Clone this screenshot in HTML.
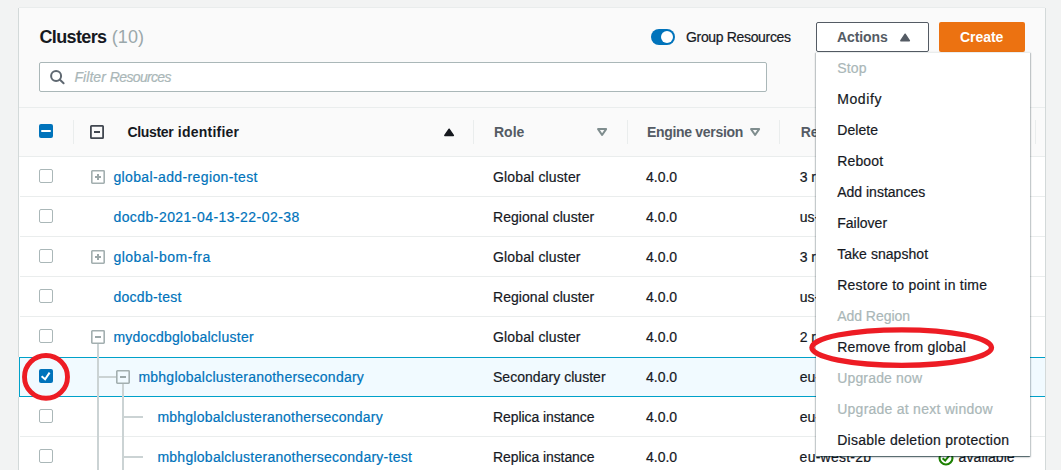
<!DOCTYPE html>
<html>
<head>
<meta charset="utf-8">
<title>Clusters</title>
<style>
*{box-sizing:border-box;margin:0;padding:0}
html,body{width:1061px;height:470px;overflow:hidden;background:#f2f3f3;font-family:"Liberation Sans",sans-serif;font-size:14px;color:#16191f}
.abs{position:absolute}
#panel{position:absolute;left:19px;top:8px;width:1026px;height:480px;background:#fff;box-shadow:1px 0 0 0 #d3d9d9,-1px 0 0 0 #d3d9d9,0 -1px 0 0 #e9ecec}
#phead{position:absolute;left:0;top:0;width:1026px;height:100px;background:#fafafa;border-bottom:1px solid #eaeded}
#thead{position:absolute;left:0;top:100px;width:1026px;height:49px;background:#fafafa;border-bottom:1px solid #eaeded}
.t{position:absolute;white-space:nowrap;line-height:20px;height:20px;-webkit-text-stroke:0.2px currentColor}
.b{font-weight:bold;-webkit-text-stroke:0}
.lnk{color:#0073bb}
.dis{color:#aab7b8}
.hl{position:absolute;left:20px;width:1025px;height:1px;background:#eaeded}
.vs{position:absolute;width:1px;height:24px;top:120px;background:#eaeded}
.cb{position:absolute;left:39px;width:14px;height:14px;border:1px solid #aab7b8;border-radius:2px;background:#fff}
.tl{position:absolute;background:#cbd3d4}
</style>
</head>
<body>
<div id="panel">
  <div id="phead"></div>
  <div id="thead"></div>
</div>

<!-- title -->
<div class="t b" id="title" style="left:39.5px;top:26px;font-size:18px;line-height:22px;height:22px;letter-spacing:-0.63px">Clusters<span id="cnt" style="font-weight:normal;color:#9aa8ab;letter-spacing:0.1px;margin-left:5.2px">(10)</span></div>

<!-- filter -->
<div class="abs" style="left:39px;top:62px;width:728px;height:30px;border:1px solid #aab7b8;border-radius:2px;background:#fff"></div>
<svg class="abs" style="left:49px;top:69px" width="17" height="17" viewBox="0 0 17 17"><circle cx="7.1" cy="7" r="5" fill="none" stroke="#5f6871" stroke-width="2"/><path d="M10.7 10.6 L14.6 14.3" stroke="#5f6871" stroke-width="2" stroke-linecap="round"/></svg>
<div class="t" id="filt" style="left:74.5px;top:67px;font-style:italic;color:#aab7b8"><span style="letter-spacing:0.05px">Filter </span><span style="letter-spacing:-0.66px">Resources</span></div>

<!-- toggle -->
<div class="abs" style="left:651px;top:29px;width:24px;height:16px;border-radius:8px;background:#0073bb"></div>
<div class="abs" style="left:661px;top:31px;width:12px;height:12px;border-radius:6px;background:#fff"></div>
<div class="t" id="grp" style="left:686px;top:27px;letter-spacing:-0.337px">Group Resources</div>

<!-- buttons -->
<div class="abs" style="left:816px;top:22px;width:113px;height:30px;border:1px solid #545b64;border-radius:2px;background:#fff"></div>
<div class="t b" id="act" style="left:837px;top:27px;color:#545b64;letter-spacing:-0.091px">Actions</div>
<svg class="abs" style="left:899.9px;top:32.7px" width="11" height="9" viewBox="0 0 11 9"><path d="M5.1 1.2 L9.4 7.7 L0.8 7.7 Z" fill="#545b64" stroke="#545b64" stroke-width="1.4" stroke-linejoin="round"/></svg>
<div class="abs" style="left:939px;top:22px;width:86px;height:30px;border-radius:2px;background:#ec7211"></div>
<div class="t b" id="crt" style="left:960px;top:27px;color:#fff;letter-spacing:-0.059px">Create</div>

<!-- table header -->
<div class="abs" style="left:39px;top:124px;width:14px;height:14px;border-radius:2px;background:#0073bb"></div>
<div class="abs" style="left:41px;top:130px;width:10px;height:2px;border-radius:1px;background:#fff"></div>
<div class="vs" style="left:73px"></div>
<div class="vs" style="left:473px"></div>
<div class="vs" style="left:627px"></div>
<div class="vs" style="left:779px"></div>
<div class="vs" style="left:1035px"></div>
<svg class="abs" style="left:90px;top:125px" width="14" height="14" viewBox="0 0 14 14"><rect x="0.9" y="0.9" width="12.2" height="12.2" rx="0.6" fill="none" stroke="#414750" stroke-width="1.8"/><rect x="4" y="6" width="6" height="2" fill="#414750"/></svg>
<div class="t b" id="h1x" style="left:127.5px;top:122px"><span style="letter-spacing:-0.36px">Cluster</span><span style="letter-spacing:0.23px;margin-left:4.6px">identifier</span></div>
<svg class="abs" style="left:443.9px;top:127.6px" width="11" height="9" viewBox="0 0 11 9"><path d="M5.1 1.2 L9.4 7.5 L0.8 7.5 Z" fill="#16191f" stroke="#16191f" stroke-width="1.4" stroke-linejoin="round"/></svg>
<div class="t b" id="h2" style="left:494px;top:122px;color:#545b64">Role</div>
<svg class="abs" style="left:597px;top:128px" width="11" height="9" viewBox="0 0 11 9"><path d="M1.1 1.1 L9.1 1.1 L5.1 7 Z" fill="none" stroke="#7f8d8e" stroke-width="2" stroke-linejoin="round"/></svg>
<div class="t b" id="h3" style="left:647px;top:122px;color:#545b64;letter-spacing:-0.312px">Engine version</div>
<svg class="abs" style="left:750px;top:128px" width="11" height="9" viewBox="0 0 11 9"><path d="M1.1 1.1 L9.1 1.1 L5.1 7 Z" fill="none" stroke="#7f8d8e" stroke-width="2" stroke-linejoin="round"/></svg>
<div class="t b" id="h4" style="left:800.7px;top:122px;color:#545b64">Re</div>

<!-- row lines -->
<div class="hl" style="top:196px"></div>
<div class="hl" style="top:236px"></div>
<div class="hl" style="top:276px"></div>
<div class="hl" style="top:316px"></div>
<div class="hl" style="top:436px"></div>
<!-- selected row -->
<div class="abs" style="left:19px;top:357px;width:1026px;height:40px;background:#f1faff;border:1px solid #00a1c9;border-right:0"></div>
<div class="abs" style="left:18px;top:357px;width:1px;height:40px;background:#f3f1f1"></div>

<!-- tree lines -->
<div class="tl" style="left:97px;top:344px;width:2px;height:130px"></div>
<div class="tl" style="left:99px;top:376px;width:17px;height:2px"></div>
<div class="tl" style="left:122px;top:384px;width:2px;height:90px"></div>
<div class="tl" style="left:124px;top:416px;width:19px;height:2px"></div>
<div class="tl" style="left:124px;top:456px;width:19px;height:2px"></div>

<!-- checkboxes -->
<div class="cb" style="top:169px"></div>
<div class="cb" style="top:209px"></div>
<div class="cb" style="top:249px"></div>
<div class="cb" style="top:289px"></div>
<div class="cb" style="top:329px"></div>
<div class="abs" style="left:39px;top:369px;width:14px;height:14px;border-radius:2px;background:#0073bb"></div>
<svg class="abs" style="left:39px;top:369px" width="14" height="14" viewBox="0 0 14 14"><path d="M2.6 7.3 L6.1 10.2 L10.6 3.6" fill="none" stroke="#fff" stroke-width="2"/></svg>
<div class="cb" style="top:409px"></div>
<div class="cb" style="top:449px"></div>

<!-- expand icons -->
<svg class="abs" style="left:91px;top:170px" width="14" height="14" viewBox="0 0 14 14"><rect x="0.8" y="0.8" width="12.4" height="12.4" rx="0.6" fill="none" stroke="#a3afb0" stroke-width="1.6"/><rect x="4" y="6" width="6" height="2" fill="#9ba7a8"/><rect x="6" y="4" width="2" height="6" fill="#9ba7a8"/></svg>
<svg class="abs" style="left:91px;top:250px" width="14" height="14" viewBox="0 0 14 14"><rect x="0.8" y="0.8" width="12.4" height="12.4" rx="0.6" fill="none" stroke="#a3afb0" stroke-width="1.6"/><rect x="4" y="6" width="6" height="2" fill="#9ba7a8"/><rect x="6" y="4" width="2" height="6" fill="#9ba7a8"/></svg>
<svg class="abs" style="left:91px;top:330px" width="14" height="14" viewBox="0 0 14 14"><rect x="0.8" y="0.8" width="12.4" height="12.4" rx="0.6" fill="none" stroke="#a3afb0" stroke-width="1.6"/><rect x="4" y="6" width="6" height="2" fill="#9ba7a8"/></svg>
<svg class="abs" style="left:116px;top:370px" width="14" height="14" viewBox="0 0 14 14"><rect x="0.8" y="0.8" width="12.4" height="12.4" rx="0.6" fill="none" stroke="#a3afb0" stroke-width="1.6"/><rect x="4" y="6" width="6" height="2" fill="#9ba7a8"/></svg>

<!-- row text -->
<div class="t lnk" id="r1" style="left:113.4px;top:167px;letter-spacing:0.376px">global-add-region-test</div>
<div class="t lnk" id="r2" style="left:113.4px;top:207px;letter-spacing:0.449px">docdb-2021-04-13-22-02-38</div>
<div class="t lnk" id="r3" style="left:113.4px;top:247px;letter-spacing:0.51px">global-bom-fra</div>
<div class="t lnk" id="r4" style="left:113.4px;top:287px;letter-spacing:0.303px">docdb-test</div>
<div class="t lnk" id="r5" style="left:113.4px;top:327px;letter-spacing:0.252px">mydocdbglobalcluster</div>
<div class="t lnk" id="r6" style="left:138.4px;top:367px;letter-spacing:0.244px">mbhglobalclusteranothersecondary</div>
<div class="t lnk" id="r7" style="left:157.4px;top:407px;letter-spacing:0.238px">mbhglobalclusteranothersecondary</div>
<div class="t lnk" id="r8" style="left:157.4px;top:447px;letter-spacing:0.26px">mbhglobalclusteranothersecondary-test</div>

<div class="t" id="c1" style="left:493px;top:167px;letter-spacing:0.147px">Global cluster</div>
<div class="t" id="c2" style="left:493px;top:207px;letter-spacing:0.054px">Regional cluster</div>
<div class="t" id="c3" style="left:493px;top:247px;letter-spacing:0.147px">Global cluster</div>
<div class="t" id="c4" style="left:493px;top:287px;letter-spacing:0.054px">Regional cluster</div>
<div class="t" id="c5" style="left:493px;top:327px;letter-spacing:0.147px">Global cluster</div>
<div class="t" id="c6" style="left:493px;top:367px;letter-spacing:0.034px">Secondary cluster</div>
<div class="t" id="c7" style="left:493px;top:407px;letter-spacing:-0.082px">Replica instance</div>
<div class="t" id="c8" style="left:493px;top:447px;letter-spacing:-0.082px">Replica instance</div>

<div class="t v" style="left:646px;top:167px">4.0.0</div>
<div class="t v" style="left:646px;top:207px">4.0.0</div>
<div class="t v" style="left:646px;top:247px">4.0.0</div>
<div class="t v" style="left:646px;top:287px">4.0.0</div>
<div class="t v" style="left:646px;top:327px">4.0.0</div>
<div class="t v" style="left:646px;top:367px">4.0.0</div>
<div class="t v" style="left:646px;top:407px">4.0.0</div>
<div class="t v" style="left:646px;top:447px">4.0.0</div>

<div class="t" style="left:799.7px;top:167px">3 regions</div>
<div class="t" style="left:799.7px;top:207px">us-east-1</div>
<div class="t" style="left:799.7px;top:247px">3 regions</div>
<div class="t" style="left:799.7px;top:287px">us-east-1</div>
<div class="t" style="left:799.7px;top:327px">2 regions</div>
<div class="t" style="left:799.7px;top:367px">eu-west-2</div>
<div class="t" style="left:799.7px;top:407px">eu-west-2a</div>
<div class="t" id="z8" style="left:799.6px;top:447.4px;letter-spacing:0.25px">eu-west-2b</div>
<svg class="abs" style="left:937.5px;top:449.7px" width="16" height="16" viewBox="0 0 16 16"><circle cx="8" cy="8" r="6.5" fill="none" stroke="#1d8102" stroke-width="2.1"/><path d="M4.6 8.2 L7.2 10.6 L11.4 5.4" fill="none" stroke="#1d8102" stroke-width="2"/></svg>
<div class="t" id="av" style="left:958.6px;top:447.4px;letter-spacing:0.1px">available</div>

<!-- dropdown -->
<div class="abs" id="dd" style="left:816px;top:52px;width:214px;height:404px;background:#fff;border-top:1px solid #eaeded;box-shadow:0 1px 0 0 rgba(0,28,36,.38),0 1px 2px 0 rgba(0,28,36,.3),1px 1px 1px 0 rgba(0,28,36,.15),-1px 1px 1px 0 rgba(0,28,36,.15)"></div>
<div class="t dis" id="m1" style="left:837.2px;top:58px;letter-spacing:0.163px">Stop</div>
<div class="t" id="m2" style="left:837.2px;top:89px;letter-spacing:0.613px">Modify</div>
<div class="t" id="m3" style="left:837.2px;top:120px;letter-spacing:0.086px">Delete</div>
<div class="t" id="m4" style="left:837.2px;top:151px;letter-spacing:0.149px">Reboot</div>
<div class="t" id="m5" style="left:837.2px;top:182px;letter-spacing:0.004px">Add instances</div>
<div class="t" id="m6" style="left:837.2px;top:213px;letter-spacing:0.015px">Failover</div>
<div class="t" id="m7" style="left:837.2px;top:244px;letter-spacing:0.05px">Take snapshot</div>
<div class="t" id="m8" style="left:837.2px;top:275px;letter-spacing:0.258px">Restore to point in time</div>
<div class="t dis" id="m9" style="left:837.2px;top:306px;letter-spacing:-0.03px">Add Region</div>
<div class="t" id="m10" style="left:837.2px;top:337px;letter-spacing:0.195px">Remove from global</div>
<div class="t dis" id="m11" style="left:837.2px;top:368px;letter-spacing:0.162px">Upgrade now</div>
<div class="t dis" id="m12" style="left:837.2px;top:399px;letter-spacing:0.252px">Upgrade at next window</div>
<div class="t" id="m13" style="left:837.2px;top:430px;letter-spacing:0.265px">Disable deletion protection</div>

<!-- red annotations -->
<svg class="abs" style="left:0;top:0" width="1061" height="470" viewBox="0 0 1061 470">
  <ellipse cx="46" cy="376.9" rx="21.5" ry="21.4" fill="none" stroke="#ed1c24" stroke-width="4.9"/>
  <ellipse cx="901.7" cy="347.6" rx="89.8" ry="17.8" fill="none" stroke="#ed1c24" stroke-width="5.3"/>
</svg>
</body>
</html>
